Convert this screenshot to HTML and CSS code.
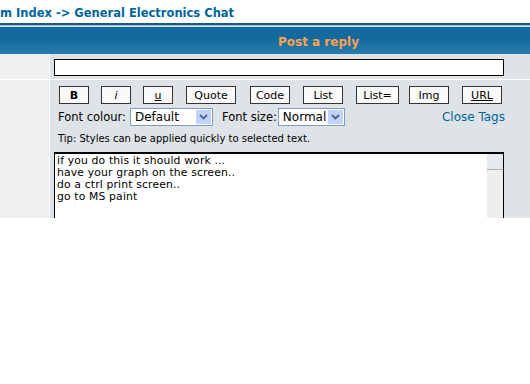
FILE: index.html
```html
<!DOCTYPE html>
<html>
<head>
<meta charset="utf-8">
<link rel="stylesheet" href="styles.css">
</head>
<body>
<div class="nav"><span class="crumb">m Index</span><span class="arrow"> -&gt; </span><span class="crumb">General Electronics Chat</span></div>
<div class="forumline">
  <div class="th"><span>Post a reply</span></div>
  <div class="rows">
    <div class="row1 r-subject"></div>
    <div class="row2 r-subject"><div class="subject"></div></div>
    <div class="row1 r-msg"></div>
    <div class="row2 r-msg">
      <div class="buttons">
        <span class="btn b-b">B</span>
        <span class="btn b-i">i</span>
        <span class="btn b-u">u</span>
        <span class="btn b-quote">Quote</span>
        <span class="btn b-code">Code</span>
        <span class="btn b-list">List</span>
        <span class="btn b-liste">List=</span>
        <span class="btn b-img">Img</span>
        <span class="btn b-url">URL</span>
      </div>
      <div class="fontrow">
        <span class="lbl">Font colour:</span>
        <span class="sel sel-col">Default<span class="arr"><svg width="9" height="6" viewBox="0 0 9 6"><path d="M1 1 L4.5 4.5 L8 1" fill="none" stroke="#4d6185" stroke-width="1.8"/></svg></span></span>
        <span class="lbl lbl-size">Font size:</span>
        <span class="sel sel-size">Normal<span class="arr"><svg width="9" height="6" viewBox="0 0 9 6"><path d="M1 1 L4.5 4.5 L8 1" fill="none" stroke="#4d6185" stroke-width="1.8"/></svg></span></span>
        <span class="close">Close Tags</span>
      </div>
      <div class="tip">Tip: Styles can be applied quickly to selected text.</div>
      <div class="textarea">
        <div class="text">
          <div class="line">if you do this it should work ...</div>
          <div class="line">have your graph on the screen..</div>
          <div class="line">do a ctrl print screen..</div>
          <div class="line">go to MS paint</div>
        </div>
        <div class="scroll"><div class="sbtn"></div></div>
      </div>
    </div>
  </div>
</div>
</body>
</html>
```
FILE: styles.css
```css
html, body { margin: 0; padding: 0; background: #fff; }
body { width: 530px; height: 384px; overflow: hidden; font-family: "DejaVu Sans", Verdana, sans-serif; }
.nav { height: 23px; font-size: 11.5px; font-weight: bold; color: #006699; line-height: 12px; padding-top: 7px; box-sizing: border-box; white-space: nowrap; }
.th { height: 31px; box-sizing: border-box; border-top: 2px solid #1b5a7a; background: linear-gradient(#9fc0d6 0, #9fc0d6 1px, #cfe0ea 1px, #cfe0ea 2px, #0f6a9e 2px, #13699c 12px, #2a7fb0 31px); color: #FFA34F; font-size: 12px; font-weight: bold; padding-left: 278px; padding-top: 10px; }
.rows { display: grid; grid-template-columns: 49px 1fr; grid-template-rows: 25px 1fr; column-gap: 1px; row-gap: 1px; background: #fff; height: 164px; overflow: hidden; }
.row1 { background: #EFEFEF; }
.row2 { background: #DEE3E7; }
.row2.r-subject { padding: 5px 0 0 4px; }
.subject { width: 448px; height: 15px; background: #fff; border: 1px solid #000; }
.r-msg.row2 { padding: 6px 0 0 4px; overflow: hidden; }
.buttons { display: flex; height: 18px; padding-left: 5px; }
.btn { box-sizing: border-box; height: 18px; border: 1px solid #333; background: #FAFAFA; font-size: 11px; color: #000; display: flex; align-items: center; justify-content: center; }
.b-b { width: 30px; font-weight: bold; }
.b-i { width: 30px; margin-left: 12px; font-style: italic; }
.b-u { width: 30px; margin-left: 12px; text-decoration: underline; }
.b-quote { width: 50px; margin-left: 13px; }
.b-code { width: 40px; margin-left: 14px; }
.b-list { width: 40px; margin-left: 13px; }
.b-liste { width: 43px; margin-left: 13px; }
.b-img { width: 40px; margin-left: 10px; }
.b-url { width: 40px; margin-left: 13px; text-decoration: underline; }
.fontrow { display: flex; align-items: center; height: 18px; margin-top: 4px; padding-left: 4px; font-size: 11.5px; color: #000; }
.lbl { flex-shrink: 0; white-space: nowrap; margin-right: 4px; }
.lbl-size { margin-left: 9px; margin-right: 1px; }
.sel { flex-shrink: 0; box-sizing: border-box; height: 18px; background: #fff; border: 1px solid #7f9db9; display: flex; align-items: center; padding-left: 4px; position: relative; font-size: 12px; }
.sel-col { width: 83px; }
.sel-size { width: 67px; }
.arr { position: absolute; right: 1px; top: 1px; width: 15px; height: 14px; background: #c1d3fb; display: flex; align-items: center; justify-content: center; }
.close { margin-left: auto; margin-right: 25px; color: #006699; font-size: 12px; }
.tip { font-size: 10px; margin-top: 7px; padding-left: 4px; color: #000; height: 12px; line-height: 12px; }
.textarea { display: flex; margin-top: 7px; width: 450px; height: 80px; background: #fff; border-top: 2px solid #000; border-left: 1px solid #000; border-right: 1px solid #000; box-sizing: border-box; }
.text { flex: 1; padding: 1px 0 0 2px; color: #000; }
.line { font-size: 10.8px; line-height: 12px; height: 12px; letter-spacing: 0.15px; white-space: nowrap; }
.scroll { width: 16px; background: #eeeeee; }
.sbtn { height: 15px; background: #e6e9ee; border-bottom: 1px solid #a8b0b8; }
```
